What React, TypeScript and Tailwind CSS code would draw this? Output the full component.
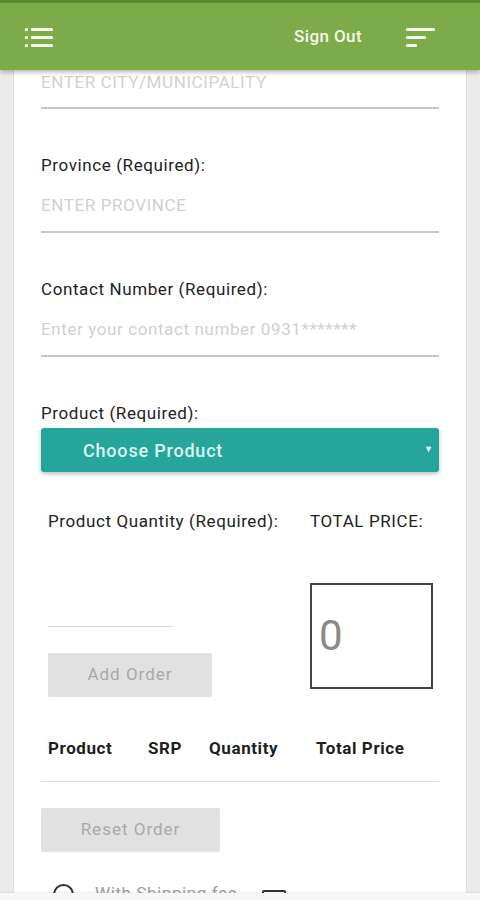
import React from 'react'

// Order form screen: green app bar, a white sheet of underlined fields,
// product picker, quantity / total, an order table head and the reset row.

const font = { fontFamily: 'Roboto, "Liberation Sans", sans-serif' }

function ListIcon() {
  return (
    <svg width="30" height="24" viewBox="0 0 30 24" className="block">
      {[3, 11, 19].map((y) => (
        <g key={y} fill="#f4f8ee">
          <rect x="0" y={y} width="3" height="3" rx="0.5" />
          <rect x="6" y={y} width="22" height="3" rx="1" />
        </g>
      ))}
    </svg>
  )
}

function SortIcon() {
  return (
    <svg width="30" height="20" viewBox="0 0 30 20" className="block">
      <rect x="0" y="1" width="29" height="3" rx="1" fill="#f4f8ee" />
      <rect x="0" y="9" width="20" height="3" rx="1" fill="#f4f8ee" />
      <rect x="0" y="17" width="11" height="3" rx="1" fill="#f4f8ee" />
    </svg>
  )
}

function Field({ label, placeholder }: { label: string; placeholder: string }) {
  return (
    <div className="mt-[46px]">
      <div className="text-[17px] leading-5 tracking-[0.6px] text-[#222]">{label}</div>
      <div className="mt-[18px] border-b-2 border-[#c4c4c4] pb-[14px] text-[17px] leading-6 tracking-[0.6px] text-[#d0d0d0]">
        {placeholder}
      </div>
    </div>
  )
}

export default function App() {
  return (
    <div className="min-h-[900px] overflow-hidden bg-[#ececec]" style={font}>
      <header className="relative z-10 h-[70px] border-t-[3px] border-[#5b8a32] bg-[#7dab49] shadow-[0_2px_5px_rgba(0,0,0,0.3)]">
        <div className="flex h-full items-center pl-[25px] pr-[44px]">
          <ListIcon />
          <span className="ml-auto text-[17px] font-medium tracking-[0.4px] text-[#f3f8ea]">Sign Out</span>
          <span className="ml-[44px]"><SortIcon /></span>
        </div>
      </header>

      <main className="mx-[13px] min-h-[830px] border-x border-[#dedede] bg-white px-[27px]">
        <div className="border-b-2 border-[#c4c4c4] pb-[13px] text-[17px] leading-6 tracking-[0.6px] text-[#d2d2d2]">
          ENTER CITY/MUNICIPALITY
        </div>

        <Field label="Province (Required):" placeholder="ENTER PROVINCE" />
        <Field label="Contact Number (Required):" placeholder="Enter your contact number 0931*******" />

        <div className="mt-[46px] text-[17px] leading-5 tracking-[0.6px] text-[#222]">Product (Required):</div>
        <div className="mt-[5px] flex h-[44px] items-center rounded-[3px] bg-[#26a69a] pl-[42px] pr-[6px] shadow-[0_2px_4px_rgba(0,0,0,0.25)]">
          <span className="text-[18px] font-medium tracking-[0.8px] text-[#dcf6f1]">Choose Product</span>
          <span className="ml-auto text-[9px] text-[#e8fbf8]">▼</span>
        </div>

        <div className="mt-[39px] flex">
          <div className="w-[269px] pl-[7px]">
            <div className="text-[17px] leading-5 tracking-[0.6px] text-[#222]">Product Quantity (Required):</div>
            <div className="mt-[95px] w-[125px] border-b border-[#d8d8d8]" />
            <div className="mt-[26px] flex h-[44px] w-[164px] items-center justify-center rounded-[2px] bg-[#e1e1e1] text-[17px] tracking-[1px] text-[#a9a9a9]">
              Add Order
            </div>
          </div>
          <div>
            <div className="text-[17px] leading-5 tracking-[0.6px] text-[#222]">TOTAL PRICE:</div>
            <div className="mt-[52px] flex h-[106px] w-[123px] items-center border-2 border-[#444] pl-[7px]">
              <span className="text-[42px] leading-none text-[#8a8a8a]">0</span>
            </div>
          </div>
        </div>

        <div className="mt-[41px] flex pl-[7px] text-[17px] font-bold leading-5 tracking-[0.6px] text-[#1e1e1e]">
          <span className="w-[100px]">Product</span>
          <span className="w-[61px]">SRP</span>
          <span className="w-[107px]">Quantity</span>
          <span>Total Price</span>
        </div>
        <div className="mt-[23px] border-b border-[#dcdcdc]" />

        <div className="mt-[26px] flex h-[44px] w-[179px] items-center justify-center rounded-[2px] bg-[#e1e1e1] text-[17px] tracking-[1px] text-[#a9a9a9]">
          Reset Order
        </div>

        <div className="mt-[24px] flex items-center pl-[12px]">
          <span className="size-[21px] rounded-full border-[2.5px] border-[#333]" />
          <span className="ml-[21px] text-[17px] tracking-[0.6px] text-[#9d9d9d]">With Shipping fee</span>
          <span className="ml-[25px] mt-[14px] h-[22px] w-[24px] rounded-[2px] border-2 border-[#333]" />
        </div>
      </main>

      <div className="fixed inset-x-0 bottom-0 z-20 h-[7px] bg-[#f7f7f7] shadow-[0_-1px_2px_rgba(0,0,0,0.08)]" />
    </div>
  )
}
